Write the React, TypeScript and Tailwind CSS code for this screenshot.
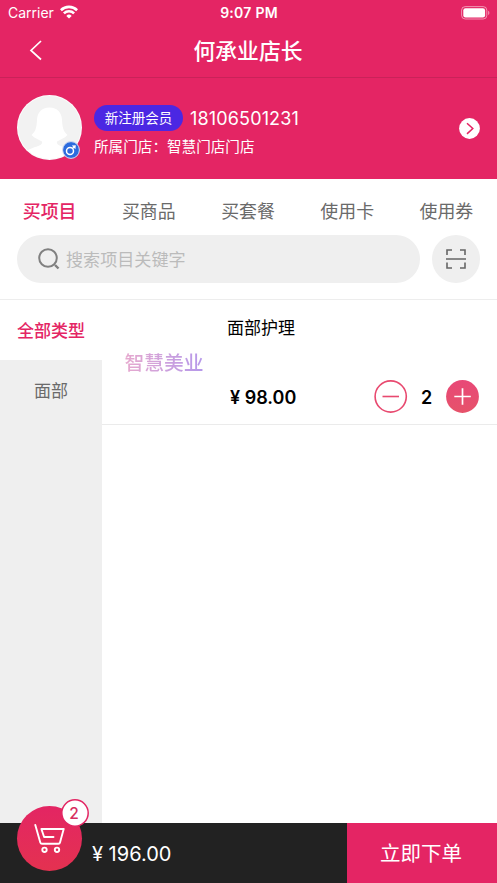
import React from 'react';

const tabs = ['买项目', '买商品', '买套餐', '使用卡', '使用券'];

function StatusBar() {
  return (
    <div className="flex h-[26px] items-center justify-between pl-[8px] pr-[7px]">
      <div className="flex w-[120px] items-center gap-[6px]">
        <span className="text-[14px] leading-[26px]">Carrier</span>
        <svg className="-mt-[2px]" width="18" height="14" viewBox="0 0 18 14" fill="none" stroke="#fff" strokeWidth="2.6">
          <path d="M0.9 5.2a11.6 11.6 0 0 1 16.2 0" />
          <path d="M3.9 8.4a7.3 7.3 0 0 1 10.2 0" />
          <path d="M9 13.6L6.3 10.9a3.9 3.9 0 0 1 5.4 0z" fill="#fff" stroke="none" />
        </svg>
      </div>
      <span className="text-[14px] font-semibold leading-[26px] tracking-[0.25px]">9:07 PM</span>
      <div className="flex w-[120px] justify-end">
        <svg className="-mt-[1px]" width="29" height="14" viewBox="0 0 29 14" fill="none">
          <rect x="0.6" y="0.6" width="25.2" height="12.4" rx="3.6" stroke="#fff" strokeOpacity=".5" />
          <rect x="2.3" y="2.2" width="21.8" height="9.2" rx="2.2" fill="#fff" />
          <path d="M27.2 4.8c1.6.6 1.6 3.6 0 4.2z" fill="#fff" fillOpacity=".55" />
        </svg>
      </div>
    </div>
  );
}

function NavBar() {
  return (
    <div className="flex h-[52px] items-center border-b border-[#c92259] px-[29px]">
      <svg className="-mt-[3px]" width="14" height="22" viewBox="0 0 14 22" fill="none" stroke="#fff" strokeWidth="1.7">
        <path d="M12 2L2 11.5L12 20.5" />
      </svg>
      <h1 className="-mt-[2px] flex-1 pr-[15px] text-center text-[21.8px] font-medium leading-[48px]">何承业店长</h1>
    </div>
  );
}

function Avatar() {
  return (
    <div className="relative h-[65px] w-[65px]">
      <svg width="65" height="65" viewBox="0 0 65 65">
        <defs>
          <clipPath id="face"><circle cx="32.5" cy="32.5" r="31.5" /></clipPath>
        </defs>
        <circle cx="32.5" cy="32.5" r="32.5" fill="#fcfcfc" />
        <g clipPath="url(#face)">
          <rect width="65" height="65" fill="#f2f2f2" />
          <path d="M32.5 12.5c-8 0-12 5-12.5 12c-.4 7-1 12-5.5 15.5c3 3.5 7.500 4.500 10.500 6.500c1 3-3 4-7 5.500c-4 1.500-8 3-11 6v8h51v-8c-3-3-7-4.500-11-6c-4-1.500-8-2.500-7-5.500c3-2 7.500-3 10.500-6.500c-4.500-3.500-5.100-8.500-5.500-15.500c-.5-7-4.500-12-12.500-12z" fill="#fff" />
        </g>
      </svg>
      <svg className="absolute left-[45px] top-[46px]" width="18" height="18" viewBox="0 0 18 18" fill="none">
        <circle cx="9" cy="9" r="8.4" fill="#2c6bdd" stroke="#d5ddf2" strokeWidth="1" />
        <circle cx="8" cy="10" r="3.5" stroke="#fff" strokeWidth="1.5" />
        <path d="M10.5 7.5l2-2" stroke="#fff" strokeWidth="1.3" />
        <path d="M9.8 4.6l4-.4l-.4 4z" fill="#fff" />
      </svg>
    </div>
  );
}

function Profile() {
  return (
    <div className="flex h-[101px] items-center px-[17px]">
      <div className="-mt-[2px]"><Avatar /></div>
      <div className="ml-3 flex flex-1 flex-col pt-[6px]">
        <div className="flex items-start">
          <span className="h-[26px] w-[89px] rounded-full bg-[#4b27e3] text-center text-[13.5px] leading-[26px]">新注册会员</span>
          <span className="ml-[7px] pt-[1px] text-[18px] leading-[26px] tracking-[0.15px]">18106501231</span>
        </div>
        <p className="mt-[4px] text-[14.6px] leading-[22px]">所属门店：智慧门店门店</p>
      </div>
      <svg className="-mt-[1px]" width="21" height="21" viewBox="0 0 21 21" fill="none">
        <circle cx="10.5" cy="10.5" r="10.4" fill="#fff" />
        <path d="M8 5.2l5.8 5.3L8 15.9" stroke="#e42564" strokeWidth="1.5" />
      </svg>
    </div>
  );
}

function SearchRow() {
  return (
    <div className="flex h-[65px] shrink-0 gap-3 border-b border-[#ededed] px-[17px]">
      <div className="flex h-12 flex-1 items-center rounded-full bg-[#efefef] pl-[21px]">
        <svg width="22" height="22" viewBox="0 0 22 22" fill="none" stroke="#808080" strokeWidth="2">
          <circle cx="10" cy="10" r="8.8" />
          <path d="M17 17l3.5 3.5" strokeWidth="2.4" />
        </svg>
        <span className="ml-[6px] pt-[1px] text-[17.1px] text-[#bbb]">搜索项目关键字</span>
      </div>
      <div className="flex h-12 w-12 items-center justify-center rounded-full bg-[#efefef]">
        <svg width="22" height="20" viewBox="0 0 22 20" fill="none" stroke="#666" strokeWidth="1.6">
          <path d="M2 6V1h5M15 1h5v5M2 13.5V19h5M15 19h5v-5.5M1 10h20" />
        </svg>
      </div>
    </div>
  );
}

function Product() {
  return (
    <div className="flex h-[125px] border-b border-[#ebebeb]">
      <div className="flex w-[124px] items-center justify-center pt-[2px]">
        <span className="bg-gradient-to-r from-[#e7a9ce] to-[#b598ea] bg-clip-text text-[19.8px] font-medium leading-[28px] text-transparent">智慧美业</span>
      </div>
      <div className="flex flex-1 flex-col pt-[14px]">
        <h2 className="ml-[1px] text-[17px] leading-[28px]">面部护理</h2>
        <div className="mt-[38px] flex h-[34px] items-center pr-[17px]">
          <span className="ml-[4px] flex-1 pt-[1px] text-[18px] font-semibold">¥ 98.00</span>
          <svg width="34" height="34" viewBox="0 0 34 34" fill="none" stroke="#e8496f">
            <circle cx="16.7" cy="16.5" r="15.6" strokeWidth="1.6" />
            <path d="M8.5 16.5h16.5" strokeWidth="1.6" />
          </svg>
          <span className="w-[38px] pr-[1px] text-center text-[18px] font-semibold">2</span>
          <svg width="34" height="34" viewBox="0 0 34 34" fill="none">
            <defs>
              <linearGradient id="plus" x2="0" y2="1">
                <stop stopColor="#e84877" /><stop offset="1" stopColor="#e6526a" />
              </linearGradient>
            </defs>
            <circle cx="16.5" cy="16.5" r="16.4" fill="url(#plus)" />
            <path d="M8.3 16.5h16.5M16.5 8.3v16.5" stroke="#fff" strokeWidth="1.7" />
          </svg>
        </div>
      </div>
    </div>
  );
}

function CartButton() {
  return (
    <div className="relative -mt-[17px] h-[65px] w-[65px] rounded-full bg-gradient-to-b from-[#e32563] to-[#e43150]">
      <svg className="absolute left-[17px] top-[18px]" width="31" height="30" viewBox="0 0 31 30" fill="none" stroke="#fff" strokeWidth="1.9" strokeLinecap="round" strokeLinejoin="round">
        <path d="M1.3 1l5 17.5q.4 1.3 1.6 1.3h16.6q1.2 0 1.5-1.2L29.7 5H7.4l2.7 8h9.4" />
        <circle cx="10.5" cy="25.8" r="2.2" />
        <circle cx="23" cy="25.8" r="2.2" />
      </svg>
      <svg className="absolute left-[44px] top-[-7px]" width="28" height="28" viewBox="0 0 28 28">
        <circle cx="14" cy="14" r="13.2" fill="#fff" stroke="#e32563" strokeWidth="1.5" />
      </svg>
      <span className="absolute left-[43px] top-[-7px] w-[28px] text-center text-[15.5px] font-medium leading-[29px] text-[#d72d60]">2</span>
    </div>
  );
}

export default function App() {
  return (
    <div className="flex h-[883px] w-[497px] flex-col overflow-hidden bg-white font-['Inter','Noto_Sans_CJK_SC',sans-serif] text-black">
      <header className="h-[179px] shrink-0 bg-[#e42564] text-white">
        <StatusBar />
        <NavBar />
        <Profile />
      </header>
      <nav className="grid h-[56px] shrink-0 grid-cols-5 pr-[1px] pt-[18px]">
        {tabs.map((tab, i) => (
          <span key={tab} className={`text-center text-[17.9px] leading-[30px] ${i === 0 ? 'font-medium text-[#e42564]' : 'text-[#6a6a6a]'}`}>{tab}</span>
        ))}
      </nav>
      <SearchRow />
      <main className="flex min-h-0 flex-1">
        <aside className="w-[102px] bg-[#efefef] text-center text-[17px] leading-[62px]">
          <div className="h-[60px] bg-white font-medium text-[#e42564]">全部类型</div>
          <div className="h-[60px] text-[#6a6a6a]">面部</div>
        </aside>
        <section className="flex-1 bg-white">
          <Product />
        </section>
      </main>
      <footer className="flex h-[60px] shrink-0 bg-[#222] text-white">
        <div className="flex flex-1 pl-[17px]">
          <CartButton />
          <span className="ml-[10px] text-[20px] leading-[62px]">¥ 196.00</span>
        </div>
        <button className="w-[150px] bg-[#e42564] pr-[2px] text-[20.5px] leading-[62px]">立即下单</button>
      </footer>
    </div>
  );
}
